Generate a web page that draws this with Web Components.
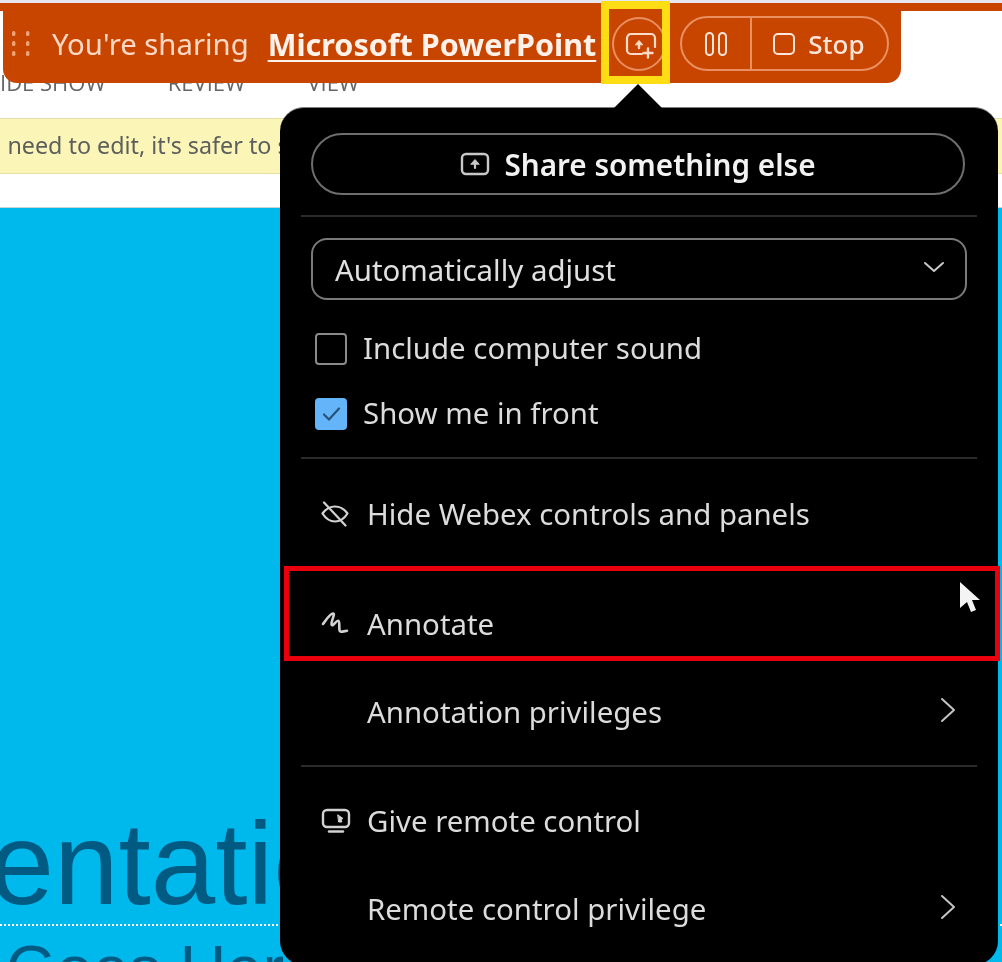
<!doctype html>
<html>
<head>
<meta charset="utf-8">
<style>
  html, body { margin: 0; height: 100%; overflow: hidden; background: #fff; }
  body { position: relative; width: 1002px; height: 962px; font-family: "Noto Sans", "Open Sans", sans-serif; filter: blur(.4px); }
</style>
</head>
<body>
  <ppt-backdrop></ppt-backdrop>
  <share-bar app="Microsoft PowerPoint"></share-bar>
  <share-menu></share-menu>
  <call-out color="#ffdd15" width="8" style="left:601px;top:1px;width:69px;height:83px"></call-out>
  <call-out color="#e9000c" width="5" style="left:284px;top:566px;width:716px;height:95px"></call-out>
  <mouse-pointer></mouse-pointer>

<script>
const icons = {
    share: `<svg viewBox="0 0 30 24" width="30" height="24" fill="none" stroke="currentColor" stroke-width="2.4" stroke-linecap="round" stroke-linejoin="round"><rect x="2" y="2" width="26" height="20" rx="4"/><path d="M15 16V9" stroke-width="2.2"/><path d="M11 12l4-4.500 4 4.500z" fill="currentColor" stroke-width="1"/></svg>`,
    sharePlus: `<svg viewBox="0 0 34 30" width="34" height="30" fill="none" stroke="currentColor" stroke-width="2.2" stroke-linecap="round" stroke-linejoin="round"><path d="M17 22H6a4 4 0 0 1-4-4V6a4 4 0 0 1 4-4h20a4 4 0 0 1 4 4v9"/><path d="M14 16V11" stroke-width="2.4"/><path d="M10.500 12.500l3.500-4 3.500 4z" fill="currentColor" stroke-width="1"/><path d="M23 16.500v9M18.500 21h9" stroke-width="2.400"/></svg>`,
    grip: `<svg viewBox="0 0 18 26" width="18" height="26" fill="currentColor"><rect x="0" y="0" width="3.400" height="5" rx="1.500"/><rect x="14" y="0" width="3.400" height="5" rx="1.500"/><rect x="0" y="10" width="3.400" height="5" rx="1.500"/><rect x="14" y="10" width="3.400" height="5" rx="1.500"/><rect x="0" y="20" width="3.400" height="5" rx="1.500"/><rect x="14" y="20" width="3.400" height="5" rx="1.500"/></svg>`,
    eyeOff: `<svg viewBox="0 0 28 26" width="28" height="26" fill="none" stroke="currentColor" stroke-width="2.200" stroke-linecap="round" stroke-linejoin="round"><path d="M1.500 12.500C5 7.500 9.500 5.500 14 5.500s9 2 12.500 7C23 18 18.500 20.500 14 20.500S5 18 1.500 12.500z"/><path d="M3 1.500l21.500 23"/></svg>`,
    squiggle: `<svg viewBox="0 0 28 24" width="28" height="24" fill="none" stroke="currentColor" stroke-width="2.600" stroke-linecap="round" stroke-linejoin="round"><path d="M2 12C5 8 9 1.500 12 1.500 15 1.500 9 11 10.700 13 12 14.500 15.500 8 17.300 8.700 19.500 9.500 17 19.700 19.700 19.700 22 19.700 24 19 26 18.700"/></svg>`,
    monitor: `<svg viewBox="0 0 30 26" width="30" height="26" fill="none" stroke="currentColor" stroke-width="2.400" stroke-linecap="round" stroke-linejoin="round"><rect x="2" y="2" width="26" height="17" rx="4"/><path d="M8 23.500h14"/><path d="M17 7l5 3.500-2 .8.800 2.700H18z" fill="currentColor" stroke-width="1"/></svg>`,
    chevronDown: `<svg viewBox="0 0 22 12" width="22" height="12" fill="none" stroke="currentColor" stroke-width="2" stroke-linecap="round" stroke-linejoin="round"><path d="M2 2l9 8 9-8"/></svg>`,
    chevronRight: `<svg viewBox="0 0 16 26" width="16" height="26" fill="none" stroke="currentColor" stroke-width="2" stroke-linecap="round" stroke-linejoin="round"><path d="M2 2l12 11L2 24"/></svg>`,
    check: `<svg viewBox="0 0 32 32" width="32" height="32" fill="none" stroke="#28527a" stroke-width="2.200" stroke-linecap="round" stroke-linejoin="round"><path d="M9 16.500l5 5 10-11"/></svg>`
};

class PptBackdrop extends HTMLElement {
    constructor() {
        super();
        this.attachShadow({ mode: 'open' }).innerHTML = `
            <style>
                :host { display: flex; flex-direction: column; height: 962px; overflow: hidden; background: #fff; }
                .top { height: 3px; background: #e6e7ee; flex: none; }
                .strip { height: 8px; background: #c84500; flex: none; }
                .ribbon {
                    height: 107px; flex: none; box-sizing: border-box;
                    padding-top: 56px; display: flex; gap: 62px;
                    font: 22px "Open Sans", sans-serif; color: #666;
                }
                .warn {
                    height: 56px; flex: none; box-sizing: border-box;
                    background: #fcf5b8; border-top: 1px solid #e6e0a6; border-bottom: 1px solid #e6e0a6;
                    font: 23.3px/53px "Noto Sans", sans-serif; color: #5c5f5c;
                    white-space: nowrap; margin-bottom: 33px; padding-left: 8px;
                }
                .warn i { font-style: normal; margin-left: -69px; }
                .slide {
                    flex: 1; background: #00b9ec; border-top: 1px solid #c6d3d8;
                    padding-top: 598px; color: #005a82; overflow: hidden;
                    font-family: "Liberation Sans", Arial, sans-serif; white-space: nowrap;
                }
                .title { font-size: 116px; line-height: 116px; margin-left: -249px; }
                .rule { border-top: 2px dotted #fff; margin-top: 2px; }
                .sub { font-size: 65px; line-height: 65px; margin: 10px 0 0 6px; }
            </style>
            <div class="top"></div>
            <div class="strip"></div>
            <div class="ribbon"><span>IDE SHOW</span><span>REVIEW</span><span>VIEW</span></div>
            <div class="warn"><i>If you </i>need to edit, it's safer to stay in Protected View.</div>
            <div class="slide">
                <div class="title">Presentation</div>
                <div class="rule"></div>
                <div class="sub">Goes Here</div>
            </div>
        `;
    }
}

class ShareBar extends HTMLElement {
    constructor() {
        super();
        this.attachShadow({ mode: 'open' }).innerHTML = `
            <style>
                :host {
                    position: absolute; left: 3px; top: 4px; width: 898px; height: 79px;
                    display: flex; align-items: center; box-sizing: border-box;
                    padding: 0 12px 0 9px; background: #c84500;
                    border-radius: 3px 3px 14px 14px; color: #ffd9c4;
                    font-size: 29.3px; white-space: nowrap;
                }
                .grip { display: flex; color: #eda27a; margin-right: 22px; }
                .who { margin-right: 19px; }
                a { color: #fff2ea; font-weight: 700; font-size: 30.5px; text-decoration: underline; text-underline-offset: 4px; text-decoration-thickness: 2px; margin-right: 16px; }
                .add {
                    width: 54px; height: 54px; border: 2px solid #e98f62; border-radius: 50%;
                    display: grid; place-items: center; box-sizing: border-box;
                    color: #ffdcc8; margin-right: 14px; flex: none;
                }
                .add svg { margin: 6px 0 0 6px; }
                .pill {
                    display: flex; height: 55px; width: 209px; box-sizing: border-box;
                    border: 2px solid #e98f62; border-radius: 28px; color: #ffe6d8; flex: none;
                }
                .pause { width: 70px; display: grid; place-items: center; border-right: 2px solid #e98f62; flex: none; box-sizing: border-box; }
                .stop { display: flex; align-items: center; gap: 13px; padding-left: 21px; font-weight: 500; font-size: 26px; }
                .box { width: 22px; height: 22px; border: 2px solid currentColor; border-radius: 5px; box-sizing: border-box; }
            </style>
            <span class="grip">${icons.grip}</span>
            <span class="who">You're sharing</span>
            <a>${this.getAttribute('app')}</a>
            <span class="add">${icons.sharePlus}</span>
            <div class="pill">
                <span class="pause"><svg viewBox="0 0 24 26" width="24" height="26" fill="none" stroke="currentColor" stroke-width="2"><rect x="2" y="2" width="7" height="22" rx="3.500"/><rect x="15" y="2" width="7" height="22" rx="3.500"/></svg></span>
                <span class="stop"><span class="box"></span>Stop</span>
            </div>
        `;
    }
}

class MenuRow extends HTMLElement {
    constructor() {
        super();
        const icon = icons[this.getAttribute('icon')] || '';
        const more = this.hasAttribute('more') ? icons.chevronRight : '';
        this.attachShadow({ mode: 'open' }).innerHTML = `
            <style>
                :host {
                    display: flex; align-items: center; height: 66px;
                    padding: 0 11px 0 10px; color: #dcdcdc; font-size: 29.4px; white-space: nowrap;
                }
                .icon { width: 46px; flex: none; display: flex; color: #d2d2d2; }
                .label { flex: 1; }
                .more { display: flex; color: #c4c4c4; margin-top: -4px; }
            </style>
            <span class="icon">${icon}</span>
            <span class="label"><slot></slot></span>
            <span class="more">${more}</span>
        `;
    }
}

class CheckRow extends HTMLElement {
    constructor() {
        super();
        const on = this.hasAttribute('checked');
        this.attachShadow({ mode: 'open' }).innerHTML = `
            <style>
                :host {
                    display: flex; align-items: center; gap: 16px; height: 32px;
                    padding-left: 4px; color: #dcdcdc; font-size: 29.4px; white-space: nowrap;
                }
                .box {
                    width: 32px; height: 32px; box-sizing: border-box; border-radius: 4px; flex: none;
                    border: 2px solid ${on ? '#64b4fa' : '#8a8a8a'};
                    background: ${on ? '#64b4fa' : 'transparent'};
                    display: grid; place-items: center;
                }
                .box svg { margin: -2px; }
                .text { margin-top: -3px; }
            </style>
            <span class="box">${on ? icons.check : ''}</span>
            <span class="text"><slot></slot></span>
        `;
    }
}

class ShareMenu extends HTMLElement {
    constructor() {
        super();
        this.attachShadow({ mode: 'open' }).innerHTML = `
            <style>
                :host {
                    position: absolute; left: 280px; top: 107px; width: 718px; height: 858px;
                    box-sizing: border-box; padding: 24px 31px 0; background: #000;
                    border-radius: 24px; border-top: 1px solid #7c7c7c; display: block;
                }
                :host::before {
                    content: ""; position: absolute; left: 334px; top: -24px; width: 48px; height: 24px;
                    background: #000; clip-path: polygon(50% 0, 100% 100%, 0 100%);
                }
                .btn {
                    height: 62px; width: 654px; box-sizing: border-box; border: 2px solid #6e6e6e; border-radius: 31px;
                    display: flex; align-items: center; justify-content: center; gap: 14px;
                    color: #f2f2f2; font-size: 29.700px; font-weight: 600; margin-top: 1px;
                }
                .btn svg { color: #c8c8c8; }
                hr { border: 0; height: 2px; background: #2b2b2b; margin: 0 -10px; }
                .select {
                    height: 62px; box-sizing: border-box; border: 2px solid #7a7a7a; border-radius: 16px;
                    display: flex; align-items: center; justify-content: space-between;
                    padding: 0 20px 0 22px; color: #e0e0e0; font-size: 29.4px;
                }
                .select span { margin-top: 1px; }
                .select svg { margin-top: -4px; color: #c8c8c8; }
            </style>
            <div class="btn">${icons.share}<span>Share something else</span></div>
            <hr style="margin-top:20px">
            <div class="select" style="margin-top:21px"><span>Automatically adjust</span>${icons.chevronDown}</div>
            <check-row style="margin-top:33px">Include computer sound</check-row>
            <check-row checked style="margin-top:33px">Show me in front</check-row>
            <hr style="margin-top:27px">
            <menu-row icon="eyeOff" style="margin-top:22px">Hide Webex controls and panels</menu-row>
            <menu-row icon="squiggle" style="margin-top:44px">Annotate</menu-row>
            <menu-row more style="margin-top:22px">Annotation privileges</menu-row>
            <hr style="margin-top:20px">
            <menu-row icon="monitor" style="margin-top:21px">Give remote control</menu-row>
            <menu-row more style="margin-top:22px">Remote control privilege</menu-row>
        `;
    }
}

class CallOut extends HTMLElement {
    constructor() {
        super();
        const c = this.getAttribute('color');
        const w = this.getAttribute('width');
        this.attachShadow({ mode: 'open' }).innerHTML = `
            <style>
                :host { position: absolute; box-sizing: border-box; border: ${w}px solid ${c}; display: block; }
            </style>
        `;
    }
}

class MousePointer extends HTMLElement {
    constructor() {
        super();
        this.attachShadow({ mode: 'open' }).innerHTML = `
            <style>
                :host { position: absolute; left: 958px; top: 580px; display: block; line-height: 0; }
            </style>
            <svg viewBox="0 0 24 36" width="24" height="36"><path d="M2 2v26l7-6 4 10 5-2-4-10h8z" fill="#f4f4f4"/></svg>
        `;
    }
}

customElements.define('ppt-backdrop', PptBackdrop);
customElements.define('share-bar', ShareBar);
customElements.define('menu-row', MenuRow);
customElements.define('check-row', CheckRow);
customElements.define('share-menu', ShareMenu);
customElements.define('call-out', CallOut);
customElements.define('mouse-pointer', MousePointer);
</script>
</body>
</html>
